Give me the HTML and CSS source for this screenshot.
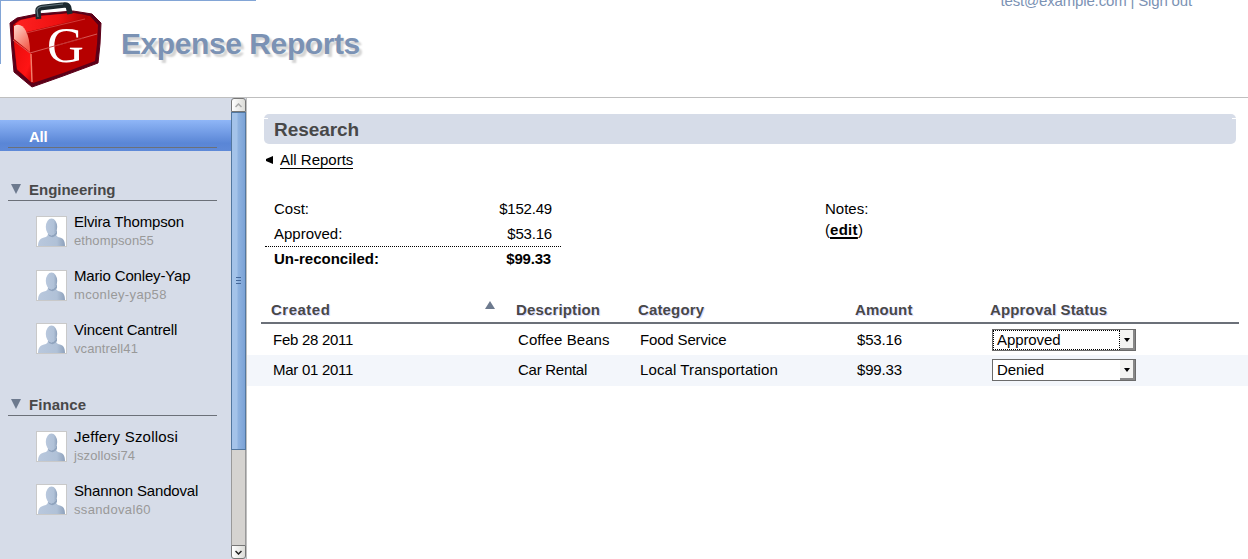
FILE: index.html
```html
<!DOCTYPE html>
<html lang="en">
<head>
<meta charset="utf-8">
<title>Expense Reports</title>
<link rel="stylesheet" href="styles.css">
</head>
<body>
<svg class="defs" width="0" height="0">
  <defs>
    <linearGradient id="skin" x1="0" y1="0" x2="1" y2="0">
      <stop offset="0" stop-color="#b9c8dd"/><stop offset=".7" stop-color="#b0c1d7"/><stop offset="1" stop-color="#8ea1bb"/>
    </linearGradient>
    <symbol id="person" viewBox="0 0 29 29">
      <path d="M1 29C1 24 3 21.500 7 20.500C10 19.700 11 19 11 16H19C19 19 20 19.700 23 20.500C26.500 21.500 28 24 28 29Z" fill="url(#skin)"/>
      <path d="M11 16Q15 22 20 13V17Q17 22 12 19Z" fill="#8fa3bd"/>
      <ellipse cx="14.500" cy="10" rx="5.700" ry="8.500" fill="url(#skin)"/>
    </symbol>
  </defs>
</svg>
<header class="header">
  <svg class="logo" viewBox="0 0 94 86" width="94" height="86">
    <defs>
      <linearGradient id="lid" x1="0" y1="0" x2="1" y2="0">
        <stop offset="0" stop-color="#ff2222"/><stop offset=".6" stop-color="#ee1111"/><stop offset="1" stop-color="#a80000"/>
      </linearGradient>
      <linearGradient id="shine" x1="0" y1="0" x2=".6" y2="1">
        <stop offset="0" stop-color="#ffd9cf"/><stop offset="1" stop-color="#f4604f"/>
      </linearGradient>
      <linearGradient id="side" x1="0" y1="0" x2="1" y2="1">
        <stop offset="0" stop-color="#e80c0c"/><stop offset=".7" stop-color="#ff1414"/><stop offset="1" stop-color="#c80000"/>
      </linearGradient>
    </defs>
    <path d="M1 21L8 16L28 12L64 9L83 12L92 21L91 42L89 61L54 74L23 85L5 70L3 48Z" fill="#5c0018" stroke="#5c0018" stroke-width="1" stroke-linejoin="round"/>
    <path d="M4 23L10 18L30 14L62 11L81 14L89 23L88 42L86 59L54 71L24 81L8 68L5 43Z" fill="#b80000"/>
    <path d="M6 22L12 18L30 14L64 11L77 13L79 16L18 30Z" fill="url(#lid)"/>
    <path d="M18 30L76 16L87 22V32L22 51Z" fill="#b50000"/>
    <path d="M5 39L22 51L23 81L8 67Z" fill="url(#side)"/>
    <path d="M22 51L87 32L84 57L54 68L24 79Z" fill="#b60000"/>
    <path d="M5 24Q12 20 17 29Q21 37 21 50L5 37Z" fill="url(#shine)"/>
    <path d="M4 38L21 51L88 32" fill="none" stroke="#db6360" stroke-width=".9"/>
    <path d="M17 31L76 17" fill="none" stroke="#df5552" stroke-width=".7"/>
    <path d="M22 52L23 80" fill="none" stroke="#f3806c" stroke-width="1.400"/>
    <path d="M29.500 17L29 9Q29 6 33 5.500L55 3Q58.500 2.500 59.500 5L61 12" fill="none" stroke="#1c292f" stroke-width="5.500" stroke-linejoin="round"/>
    <path d="M29 15L28 8Q28.500 5.500 32 4.500L54 2" fill="none" stroke="#65767d" stroke-width="1.200"/>
    <text class="logo-letter" x="38" y="60">G</text>
    <path d="M38 46L75 36" stroke="#bd2a2a" stroke-width=".8"/>
  </svg>
  <h1 class="brand">Expense Reports</h1>
  <div class="account">test@example.com | Sign out</div>
</header>
<div class="body">
  <nav class="sidebar">
    <div class="all"><span class="all-label">All</span></div>
    <section class="group">
      <h2 class="group-title tight"><i class="arrow-down"></i>Engineering</h2>
      <div class="person"><svg class="avatar"><use href="#person"/></svg><div><div class="name">Elvira Thompson</div><div class="user">ethompson55</div></div></div>
      <div class="person"><svg class="avatar"><use href="#person"/></svg><div><div class="name">Mario Conley-Yap</div><div class="user wide">mconley-yap58</div></div></div>
      <div class="person last"><svg class="avatar"><use href="#person"/></svg><div><div class="name">Vincent Cantrell</div><div class="user">vcantrell41</div></div></div>
    </section>
    <section class="group next">
      <h2 class="group-title"><i class="arrow-down"></i>Finance</h2>
      <div class="person"><svg class="avatar"><use href="#person"/></svg><div><div class="name open">Jeffery Szollosi</div><div class="user">jszollosi74</div></div></div>
      <div class="person last"><svg class="avatar"><use href="#person"/></svg><div><div class="name">Shannon Sandoval</div><div class="user wide">ssandoval60</div></div></div>
    </section>
  </nav>
  <div class="scrollbar">
    <div class="sb-btn sb-up"><svg width="7" height="5" viewBox="0 0 7 5"><path d="M.5 4L3.500 1L6.500 4" fill="none" stroke="#aaa" stroke-width="1.500"/></svg></div>
    <div class="sb-thumb"><i></i><i></i><i></i></div>
    <div class="sb-track"></div>
    <div class="sb-btn sb-down"><svg width="7" height="5" viewBox="0 0 7 5"><path d="M.5 1L3.500 4L6.500 1" fill="none" stroke="#222" stroke-width="1.500"/></svg></div>
  </div>
  <main class="main">
    <h2 class="title">Research</h2>
    <div class="back"><svg width="7" height="8" viewBox="0 0 7 8"><path d="M7 0V8L0 5V3Z"/></svg><a class="link">All Reports</a></div>
    <div class="summary">
      <div class="totals">
        <div class="total"><span>Cost:</span><span class="money">$152.49</span></div>
        <div class="total dotted"><span>Approved:</span><span class="money">$53.16</span></div>
        <div class="total bold"><span>Un-reconciled:</span><span class="money">$99.33</span></div>
      </div>
      <div class="notes">Notes:<br>(<a class="edit">edit</a>)</div>
    </div>
    <div class="grid head"><span class="created">Created<i class="arrow-up"></i></span><span>Description</span><span>Category</span><span>Amount</span><span>Approval Status</span></div>
    <div class="grid row"><span class="cell date">Feb 28 2011</span><span class="cell open">Coffee Beans</span><span class="cell snug">Food Service</span><span class="cell snug">$53.16</span><div class="select focus"><span class="value">Approved</span><span class="drop"><i></i></span></div></div>
    <div class="grid row alt"><span class="cell date">Mar 01 2011</span><span class="cell date">Car Rental</span><span class="cell loose">Local Transportation</span><span class="cell snug">$99.33</span><div class="select"><span class="value">Denied</span><span class="drop"><i></i></span></div></div>
  </main>
</div>
</body>
</html>
```

FILE: styles.css
```css
* { box-sizing: border-box; }
body {
  margin: 0; width: 1248px; height: 559px; overflow: hidden;
  display: flex; flex-direction: column; background: #fff; color: #000;
  font-family: "Liberation Sans", Arial, sans-serif; font-size: 15px;
}
h1, h2 { margin: 0; }
.defs { position: absolute; }
.header {
  height: 98px; flex: none; display: flex; border-bottom: 1px solid #bfbfbf;
  background:
    linear-gradient(#82a5d6, #82a5d6) 0 0 / 256px 1px no-repeat,
    linear-gradient(#82a5d6, #82a5d6) 0 0 / 1px 64px no-repeat;
}
.logo { margin: 2px 0 0 9px; flex: none; }
.logo-letter { font-family: "Liberation Serif", serif; font-size: 51px; fill: #fff; }
.brand {
  margin: 25px 0 0 18px; font-size: 30px; line-height: 38px; color: #7b92b4;
  letter-spacing: -.42px; text-shadow: 3px 3px 2px #d4d4d4; white-space: nowrap;
}
.account { margin: -8px 56px 0 auto; line-height: 18px; color: #7b92b4; letter-spacing: -.16px; }
.body { flex: 1; display: flex; min-height: 0; }
.sidebar { width: 231px; background: #d6dce8; padding-top: 22px; flex: none; overflow: hidden; }
.all {
  height: 31px; padding: 7px 14px 0 8px; color: #fff; font-weight: bold;
  background: linear-gradient(#8fb6f7, #5a86d6 75%, #5f8ad8);
}
.all-label { display: block; height: 21px; line-height: 20px; padding-left: 21px; letter-spacing: -.3px; border-bottom: 1px solid #6b7078; }
.group { padding-top: 29px; }
.next { padding-top: 20px; }
.group-title {
  display: flex; align-items: center; height: 21px; margin: 0 14px 12px 8px; line-height: 20px;
  font-size: 15px; letter-spacing: .05px; color: #484848; border-bottom: 1px solid #6b7078;
}
.tight { letter-spacing: -.02px; }
.arrow-down { border: 5px solid transparent; border-top: 10px solid #6d7a8e; border-bottom: 0; margin: 0 8px 2px 3px; }
.person { display: flex; height: 54px; padding-left: 36px; }
.avatar { width: 31px; height: 31px; margin: 3px 7px 0 0; border: 1px solid #c9c9c9; background: #fff; flex: none; }
.last .avatar { margin-top: 2px; }
.name { line-height: 18px; letter-spacing: -.16px; }
.user { line-height: 18px; margin-top: 1px; font-size: 13px; color: #999; letter-spacing: .1px; }
.user.wide { letter-spacing: .35px; }
.open { letter-spacing: .08px; }
.name.open { letter-spacing: .22px; }
.scrollbar { width: 16px; flex: none; display: flex; flex-direction: column; border-right: 1px solid #bfbfbf; background: #d6dce8; }
.sb-btn { height: 14px; border: 1px solid #777; background: linear-gradient(90deg, #fff, #dcdcd8); display: flex; align-items: center; justify-content: center; }
.sb-up { border-radius: 3px 3px 0 0; }
.sb-down { border-radius: 0 0 3px 3px; }
.sb-thumb {
  height: 338px; border: 1px solid #52779f; display: flex; flex-direction: column; align-items: center; justify-content: center; gap: 2px;
  padding-bottom: 1px; background: linear-gradient(90deg, #a4c3e9 0 5px, #8fb3e0 6px, #7ba2d6 13px);
}
.sb-thumb i { width: 5px; height: 1px; background: #45689a; }
.sb-track { flex: 1; background: #d5d3d0; border: solid #999; border-width: 0 1px; }
.main { flex: 1; padding-top: 16px; }
.title {
  width: 972px; height: 30px; margin-left: 17px; padding-left: 10px; border-radius: 5px;
  font-size: 19px; line-height: 31px; letter-spacing: -.05px; color: #484848;
  background:
    linear-gradient(#fff, #fff) 0 4px / 4px 1px no-repeat,
    linear-gradient(#fff, #fff) 100% 4px / 4px 1px no-repeat, #d6dce8;
}
.back { display: flex; align-items: center; margin: 7px 0 0 19px; gap: 7px; height: 18px; }
.link { border-bottom: 1px solid #000; line-height: 16px; }
.summary { display: flex; margin: 28px 0 0 17px; height: 98px; }
.totals { width: 297px; }
.total { display: flex; justify-content: space-between; height: 25px; line-height: 23px; padding: 0 9px 0 10px; }
.dotted { border-bottom: 1px dotted #000; margin-left: 1px; padding-left: 9px; }
.bold { font-weight: bold; padding-right: 10px; }
.money { letter-spacing: -.2px; }
.notes { margin: 1px 0 0 264px; line-height: 21px; }
.edit { font-weight: bold; letter-spacing: .3px; text-decoration: underline; text-decoration-thickness: 2px; text-underline-offset: 2px; }
.grid { display: grid; grid-template-columns: 245px 122px 217px 135px 1fr; align-items: center; }
.head {
  height: 29px; margin: 0 9px 1px 14px; padding: 2px 0 0 10px; font-weight: bold; color: #484848;
  border-bottom: 2px solid #6b7078; letter-spacing: .15px; text-shadow: 1px 1px 0 #ddf;
}
.created { display: flex; justify-content: space-between; padding-right: 21px; letter-spacing: .5px; }
.arrow-up { border: 5.500px solid transparent; border-bottom: 8px solid #6d7a8e; border-top: 0; height: 0; }
.row { height: 30px; padding-left: 26px; }
.cell { padding-bottom: 2px; }
.alt { height: 31px; padding-bottom: 1px; background: #f3f6fb; }
.date { letter-spacing: -.27px; }
.snug { letter-spacing: -.16px; }
.loose { letter-spacing: .1px; }
.select { width: 144px; height: 22px; display: flex; border: 1px solid #6b6b6b; background: #fff; }
.value { flex: 1; padding-left: 4px; line-height: 20px; letter-spacing: -.1px; }
.focus .value { border: 1px dotted #000; padding-left: 3px; line-height: 18px; }
.drop { width: 15px; display: flex; align-items: center; justify-content: center; background: #f4f4f2; border: solid #888; border-width: 0 2px 2px 0; }
.drop i { border: 3.500px solid transparent; border-top: 4px solid #000; border-bottom: 0; margin-top: 2px; }
```
